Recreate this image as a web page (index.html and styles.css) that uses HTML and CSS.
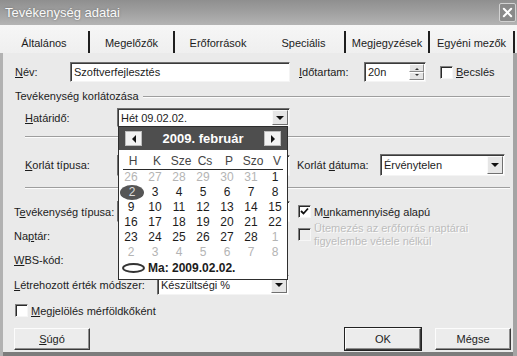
FILE: index.html
```html
<!DOCTYPE html>
<html lang="hu">
<head>
    <meta charset="UTF-8">
    <title>Tevékenység adatai</title>
    <link rel="stylesheet" href="styles.css">
</head>
<body>
    <div class="dialog">
        <div class="titlebar">
            <span class="title">Tevékenység adatai</span>
            <span class="close-btn">
                <svg viewBox="0 0 12 12" width="11" height="11"><path d="M2 2L10 10M10 2L2 10" stroke="#fff" stroke-width="2.2" stroke-linecap="round"/></svg>
            </span>
        </div>

        <div class="frame">
            <div class="tabs">
                <div class="tab" style="width: 90px">Általános</div>
                <div class="tab" style="width: 85px">Megelőzők</div>
                <div class="tab no-sep" style="width: 88px">Erőforrások</div>
                <div class="tab active" style="width: 83px">Speciális</div>
                <div class="tab" style="width: 84px">Megjegyzések</div>
                <div class="tab" style="width: 85px">Egyéni mezők</div>
            </div>

            <div class="panel">
                <div class="row row-name">
                    <label class="lbl lbl-name"><u>N</u>év:</label>
                    <div class="field field-name">Szoftverfejlesztés</div>
                    <label class="lbl lbl-duration"><u>I</u>dőtartam:</label>
                    <div class="field field-spin">
                        20n
                        <span class="spin">
                            <span class="spin-btn"><i class="tri-up"></i></span>
                            <span class="spin-btn"><i class="tri-down small"></i></span>
                        </span>
                    </div>
                    <span class="check"></span>
                    <label class="check-label"><u>B</u>ecslés</label>
                </div>

                <div class="group-title">
                    <span>Tevékenység korlátozása</span>
                    <span class="group-line"></span>
                </div>

                <div class="row row-deadline">
                    <label class="lbl lbl-ind"><u>H</u>atáridő:</label>
                    <div class="field combo combo-deadline">
                        Hét 09.02.02.
                        <span class="drop"><i class="tri-down"></i></span>
                    </div>
                </div>

                <div class="sep sep-1"></div>

                <div class="row row-constraint">
                    <label class="lbl lbl-ind"><u>K</u>orlát típusa:</label>
                    <div class="field combo combo-hidden">
                        <span class="drop"><i class="tri-down"></i></span>
                    </div>
                    <label class="lbl lbl-cdate">Korlát <u>d</u>átuma:</label>
                    <div class="field combo combo-cdate">
                        Érvénytelen
                        <span class="drop"><i class="tri-down"></i></span>
                    </div>
                </div>

                <div class="sep sep-2"></div>

                <div class="split">
                    <div class="col-left">
                        <div class="row row-small">
                            <label class="lbl lbl-type">T<u>e</u>vékenység típusa:</label>
                            <div class="field combo combo-hidden">
                                <span class="drop"><i class="tri-down"></i></span>
                            </div>
                        </div>
                        <div class="row row-small">
                            <label class="lbl lbl-type">Na<u>p</u>tár:</label>
                        </div>
                        <div class="row row-small">
                            <label class="lbl lbl-type"><u>W</u>BS-kód:</label>
                        </div>
                        <div class="row row-ev">
                            <label class="lbl lbl-ev"><u>L</u>étrehozott érték módszer:</label>
                            <div class="field combo combo-ev">
                                Készültségi %
                                <span class="drop"><i class="tri-down"></i></span>
                            </div>
                        </div>
                    </div>
                    <div class="col-right">
                        <div class="check-row">
                            <span class="check checked">
                                <svg viewBox="0 0 9 9" width="9" height="9"><path d="M1 4L3.5 6.5L8 1.5" fill="none" stroke="#111" stroke-width="1.8"/></svg>
                            </span>
                            <label class="check-label">M<u>u</u>nkamennyiség alapú</label>
                        </div>
                        <div class="check-row disabled">
                            <span class="check"></span>
                            <label class="check-label">Ütemezés az erőforrás naptárai<br>figyelembe vétele nélkül</label>
                        </div>
                    </div>
                </div>

                <div class="check-row milestone">
                    <span class="check"></span>
                    <label class="check-label"><u>M</u>egjelölés mérföldkőként</label>
                </div>

                <div class="buttons">
                    <button class="btn"><u>S</u>úgó</button>
                    <span class="spacer"></span>
                    <button class="btn btn-default">OK</button>
                    <button class="btn">Mégse</button>
                </div>
            </div>
        </div>

        <div class="calendar">
            <div class="cal-header">
                <span class="cal-nav"><i class="tri-left"></i></span>
                <span class="cal-title">2009. február</span>
                <span class="cal-nav"><i class="tri-right"></i></span>
            </div>
            <div class="cal-weekdays">
                <span>H</span><span>K</span><span>Sze</span><span>Cs</span><span>P</span><span>Szo</span><span>V</span>
            </div>
            <div class="cal-days">
                <span class="other">26</span><span class="other">27</span><span class="other">28</span><span class="other">29</span><span class="other">30</span><span class="other">31</span><span>1</span>
                <span class="today">2</span><span>3</span><span>4</span><span>5</span><span>6</span><span>7</span><span>8</span>
                <span>9</span><span>10</span><span>11</span><span>12</span><span>13</span><span>14</span><span>15</span>
                <span>16</span><span>17</span><span>18</span><span>19</span><span>20</span><span>21</span><span>22</span>
                <span>23</span><span>24</span><span>25</span><span>26</span><span>27</span><span>28</span><span class="other">1</span>
                <span class="other">2</span><span class="other">3</span><span class="other">4</span><span class="other">5</span><span class="other">6</span><span class="other">7</span><span class="other">8</span>
            </div>
            <div class="cal-today">
                <span class="oval"></span>
                <span>Ma: 2009.02.02.</span>
            </div>
        </div>
    </div>
</body>
</html>
```

FILE: styles.css
```css
* {
    margin: 0;
    padding: 0;
    box-sizing: border-box;
}

html, body {
    width: 517px;
    height: 356px;
    overflow: hidden;
}

body {
    font-family: "Liberation Sans", Arial, sans-serif;
    font-size: 11px;
    color: #1c1c1c;
    background-color: #e8e8e8;
}

u {
    text-decoration: underline;
    text-underline-offset: 1px;
}

.dialog {
    position: relative;
    width: 517px;
    height: 356px;
    display: flex;
    flex-direction: column;
}

/* title bar */

.titlebar {
    height: 25px;
    display: flex;
    align-items: center;
    justify-content: space-between;
    padding: 0 1px 0 5px;
    background: linear-gradient(#8f8f8f, #a2a2a2 55%, #b4b4b4);
    flex-shrink: 0;
}

.title {
    color: #fafafa;
    font-size: 13px;
    text-shadow: 0 0 2px rgba(90, 90, 90, 0.8);
}

.close-btn {
    width: 17px;
    height: 19px;
    display: flex;
    align-items: center;
    justify-content: center;
    background-color: #8a8a8a;
    border: 1px solid #d2d2d2;
    border-radius: 2px;
}

/* frame + tabs */

.frame {
    flex: 1;
    display: flex;
    flex-direction: column;
    background-color: #eaeaea;
    box-shadow: inset 3px 0 #b2b2b2, inset -4px 0 #a4a4a4, inset 0 -4px #7c7c7c;
}

.tabs {
    height: 28px;
    display: flex;
    padding-top: 6px;
    background: linear-gradient(#f6f6f6, #efefef);
    flex-shrink: 0;
}

.tab {
    height: 22px;
    display: flex;
    align-items: center;
    justify-content: center;
    padding-top: 2px;
    white-space: nowrap;
    border-right: 2px solid #1e1e1e;
}

.tab.no-sep {
    border-right-color: transparent;
}

.panel {
    flex: 1;
    display: flex;
    flex-direction: column;
    padding: 9px 0 0 0;
}

/* rows */

.row {
    display: flex;
    align-items: center;
}

.lbl {
    flex-shrink: 0;
    white-space: nowrap;
}

.row-name {
    height: 20px;
    padding-left: 15px;
}

.lbl-name { width: 55px; }
.lbl-duration { width: 65px; margin-left: 9px; }
.lbl-ind { width: 92px; margin-left: 25px; }
.lbl-cdate { width: 83px; margin-left: 7px; }
.lbl-type { width: 103px; margin-left: 14px; }
.lbl-ev { width: 143px; margin-left: 14px; }

.field {
    position: relative;
    height: 20px;
    display: flex;
    align-items: center;
    padding-left: 3px;
    background-color: #fff;
    border: 1px solid;
    border-color: #707070 #f4f4f4 #f4f4f4 #707070;
    box-shadow: inset 1px 1px #3a3a3a;
    flex-shrink: 0;
}

.field-name { width: 220px; }

.field-spin {
    width: 62px;
}

.spin {
    position: absolute;
    right: 1px;
    top: 1px;
    bottom: 1px;
    width: 15px;
    display: flex;
    flex-direction: column;
}

.spin-btn {
    flex: 1;
    display: flex;
    align-items: center;
    justify-content: center;
    background-color: #e4e4e4;
    border: 1px solid;
    border-color: #fff #8a8a8a #8a8a8a #fff;
}

.combo {
    height: 20px;
}

.drop {
    position: absolute;
    right: 1px;
    top: 1px;
    bottom: 1px;
    width: 16px;
    display: flex;
    align-items: center;
    justify-content: center;
    background-color: #e6e6e6;
    border: 1px solid;
    border-color: #fafafa #707070 #707070 #fafafa;
}

.combo-deadline { width: 173px; height: 19px; }
.combo-hidden { width: 173px; height: 21px; }
.combo-cdate { width: 125px; height: 22px; }
.combo-ev { width: 132px; }

.tri-down, .tri-up, .tri-left, .tri-right {
    display: block;
    width: 0;
    height: 0;
    border-style: solid;
}

.tri-down {
    border-width: 4px 4px 0 4px;
    border-color: #111 transparent transparent transparent;
}

.tri-down.small, .tri-up {
    border-width: 2px;
}

.tri-down.small {
    border-color: #333 transparent transparent transparent;
}

.tri-up {
    border-color: transparent transparent #333 transparent;
}

.tri-left {
    border-width: 4px 4px 4px 0;
    border-color: transparent #111 transparent transparent;
}

.tri-right {
    border-width: 4px 0 4px 4px;
    border-color: transparent transparent transparent #111;
}

/* checkboxes */

.check {
    width: 13px;
    height: 13px;
    margin-left: 14px;
    display: flex;
    align-items: center;
    justify-content: center;
    background-color: #fff;
    border: 1px solid;
    border-color: #808080 #f6f6f6 #f6f6f6 #808080;
    box-shadow: inset 1px 1px #2a2a2a;
    flex-shrink: 0;
}

.check-label {
    margin-left: 3px;
    white-space: nowrap;
}

.check-row {
    display: flex;
    align-items: center;
}

.check-row .check {
    margin-left: 0;
}

.check-row.disabled {
    margin-top: 4px;
    align-items: flex-start;
    color: #bdbdbd;
    text-shadow: 1px 1px #fdfdfd;
    line-height: 13px;
}

.check-row.disabled .check {
    margin-top: 6px;
    background-color: #ececec;
}

/* group title and separators */

.group-title {
    height: 14px;
    margin-top: 7px;
    padding-left: 15px;
    display: flex;
    align-items: center;
}

.group-line {
    flex: 1;
    height: 2px;
    margin: 1px 7px 0 4px;
    border-top: 1px solid #9e9e9e;
    border-bottom: 1px solid #fcfcfc;
}

.row-deadline {
    margin-top: 5px;
    height: 19px;
}

.sep {
    height: 2px;
    margin: 0 7px 0 25px;
    border-top: 1px solid #9e9e9e;
    border-bottom: 1px solid #fcfcfc;
}

.sep-1 { margin-top: 9px; }
.sep-2 { margin-top: 11px; }

.row-constraint {
    margin-top: 16px;
    height: 22px;
}

/* lower split */

.split {
    display: flex;
    margin-top: 12px;
}

.col-left {
    width: 292px;
    display: flex;
    flex-direction: column;
}

.row-small {
    height: 21px;
    margin-bottom: 3px;
}

.row-ev {
    height: 20px;
    margin-top: 2px;
}

.col-right {
    display: flex;
    flex-direction: column;
    padding: 4px 0 0 6px;
}

.milestone {
    margin: 9px 0 0 15px;
}

/* buttons */

.buttons {
    display: flex;
    margin-top: 11px;
    padding: 0 6px 0 14px;
}

.spacer {
    flex: 1;
}

.btn {
    width: 76px;
    height: 22px;
    font-family: inherit;
    font-size: 11px;
    color: #1c1c1c;
    background-color: #ececec;
    border: 1px solid;
    border-color: #fcfcfc #3a3a3a #3a3a3a #fcfcfc;
    box-shadow: inset -1px -1px #8e8e8e;
}

.btn-default {
    margin-right: 14px;
    outline: 1px solid #222;
}

/* calendar popup */

.calendar {
    position: absolute;
    left: 118px;
    top: 126px;
    width: 170px;
    height: 154px;
    font-size: 12px;
    background-color: #fff;
    border: 1px solid #2e2e2e;
}

.cal-header {
    height: 23px;
    display: flex;
    align-items: center;
    justify-content: space-between;
    padding: 0 6px;
    background-color: #4e4e4e;
}

.cal-nav {
    width: 17px;
    height: 15px;
    display: flex;
    align-items: center;
    justify-content: center;
    background-color: #f2f2f2;
    border: 1px solid #bdbdbd;
}

.cal-title {
    color: #fff;
    font-size: 13px;
    font-weight: bold;
}

.cal-weekdays {
    display: grid;
    grid-template-columns: repeat(7, 24px);
    height: 20px;
    margin: 0 4px;
    padding: 4px 0 0 0;
    border-bottom: 1px solid #2a2a2a;
    color: #444;
}

.cal-weekdays span {
    margin-left: -4px;
    text-align: center;
}

.cal-days {
    display: grid;
    grid-template-columns: repeat(7, 24px);
    grid-auto-rows: 15px;
    line-height: 15px;
}

.cal-days span {
    text-align: center;
}

.cal-days .other {
    color: #b4b4b4;
}

.cal-days .today {
    margin: 0 -1px 0 1px;
    color: #ddd;
    background-color: #555;
    border-radius: 50%;
}

.cal-today {
    height: 16px;
    display: flex;
    align-items: center;
    padding-left: 3px;
    font-weight: bold;
}

.oval {
    width: 23px;
    height: 10px;
    margin-right: 3px;
    border: 2px solid #333;
    border-radius: 50%;
}
```
